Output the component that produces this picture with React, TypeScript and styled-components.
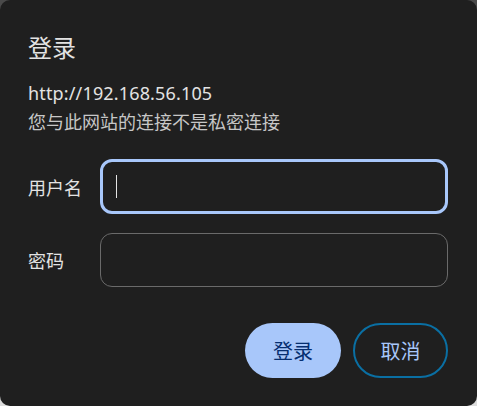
import styled, { createGlobalStyle } from "styled-components"

const GlobalStyle = createGlobalStyle`
  html, body {
    margin:0;
    padding:0;
    height:100%;
    background:linear-gradient(#4a4a4a 0 50%, #dcdcdc 50% 100%);
  }
  #root {
    height:100%;
  }
`

const CJK = `"Noto Sans", "Noto Sans CJK SC", sans-serif`

export default function App() {
  return (
    <>
      <GlobalStyle />
      <Dialog>

        <Title>登录</Title>

        <Url>http://192.168.56.105</Url>
        <Notice>您与此网站的连接不是私密连接</Notice>

        <Form>

          <Row>
            <Label>用户名</Label>
            <Field $focused>
              <Caret />
            </Field>
          </Row>

          <Row>
            <Label>密码</Label>
            <Field />
          </Row>

        </Form>

        <Buttons>
          <PrimaryButton>登录</PrimaryButton>
          <OutlineButton>取消</OutlineButton>
        </Buttons>

      </Dialog>
    </>
  )
}

const Dialog = styled.div`
  box-sizing:border-box;
  width:477px;
  height:406px;
  background:#1f1f1f;
  border-radius:10px;
  padding:30px 29px 0 28px;
  display:flex;
  flex-direction:column;
  font-family:${CJK};
  color:#e3e3e3;
`

const Title = styled.div`
  font-size:24px;
  line-height:36px;
  height:36px;
`

const Url = styled.div`
  margin-top:14px;
  font-size:18px;
  letter-spacing:0.15px;
  line-height:26px;
`

const Notice = styled.div`
  margin-top:4px;
  font-size:18px;
  line-height:24px;
  color:#c7c7c7;
`

const Form = styled.div`
  margin-top:25px;
  display:flex;
  flex-direction:column;
  gap:19px;
`

const Row = styled.div`
  display:flex;
  align-items:center;
`

const Label = styled.div`
  width:72px;
  font-size:18px;
`

const Field = styled.div<{ $focused?: boolean }>`
  box-sizing:border-box;
  flex:1;
  height:${p => p.$focused ? 55 : 54}px;
  border-radius:12px;
  border:${p => p.$focused ? "3px solid #a8c7fa" : "1.5px solid #6a6a6a"};
  padding-left:${p => p.$focused ? 13 : 15}px;
  display:flex;
  align-items:center;
`

const Caret = styled.span`
  width:1px;
  height:23px;
  background:#e3e3e3;
`

const Buttons = styled.div`
  margin-top:36px;
  display:flex;
  justify-content:flex-end;
  gap:12px;
`

const PrimaryButton = styled.button`
  box-sizing:border-box;
  width:96px;
  height:55px;
  border:none;
  border-radius:28px;
  background:#a8c7fa;
  color:#062e6f;
  font-family:${CJK};
  font-size:20px;
  padding:0;
`

const OutlineButton = styled.button`
  box-sizing:border-box;
  width:95px;
  height:55px;
  border:2px solid #0a6fa3;
  border-radius:28px;
  background:transparent;
  color:#a8c7fa;
  font-family:${CJK};
  font-size:20px;
  padding:0;
`
